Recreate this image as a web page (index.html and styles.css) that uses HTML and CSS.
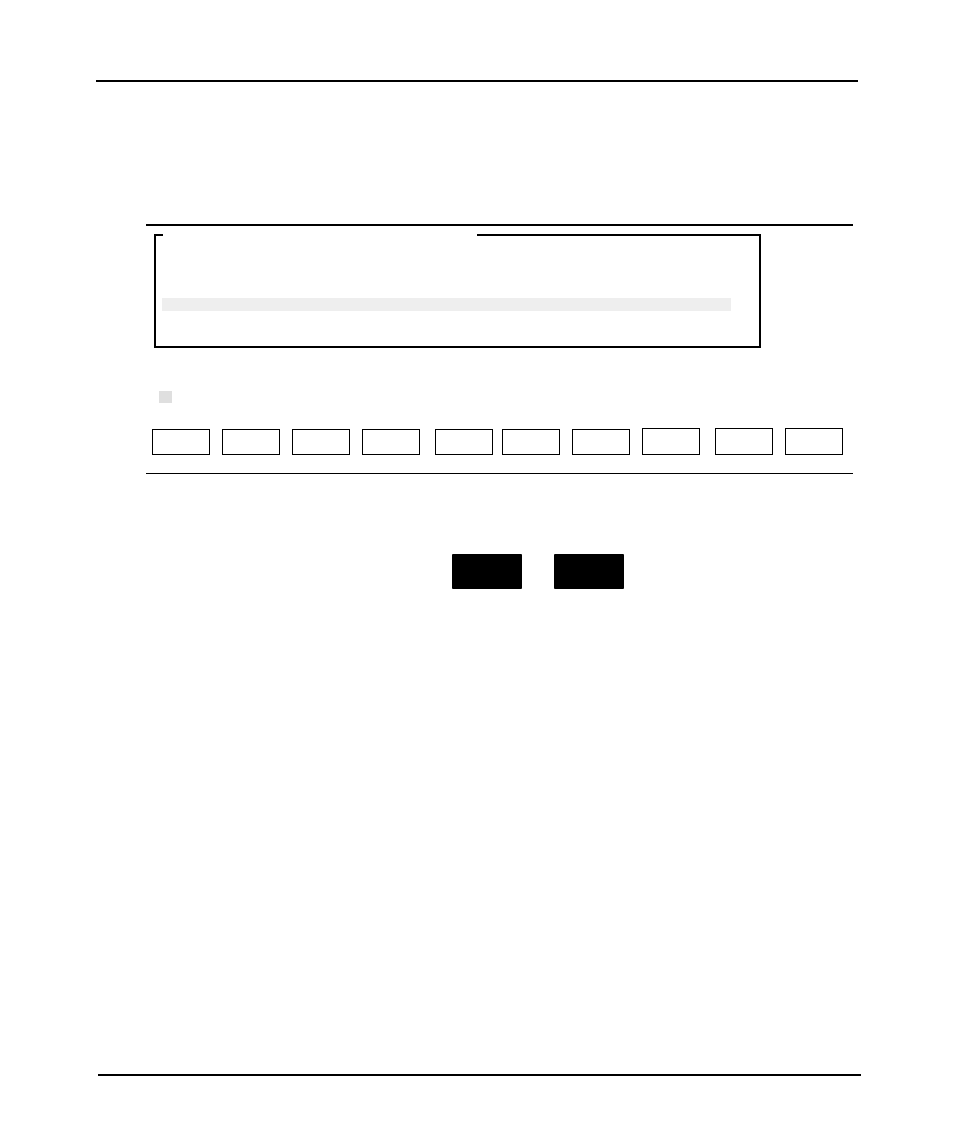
FILE: index.html
```html
<!DOCTYPE html>
<html lang="en">
<head>
  <meta charset="UTF-8">
  <meta name="viewport" content="width=device-width, initial-scale=1.0">
  <title>Screen</title>
  <link rel="stylesheet" href="styles.css">
</head>
<body>
  <header class="page-header"></header>

  <main class="content">
    <section class="screen">
      <fieldset class="panel">
        <legend class="panel-title"></legend>
        <div class="selected-row"></div>
      </fieldset>
      <div class="cursor"></div>
      <div class="softkeys">
        <button type="button" class="softkey" aria-label="F1"></button>
        <button type="button" class="softkey" aria-label="F2"></button>
        <button type="button" class="softkey" aria-label="F3"></button>
        <button type="button" class="softkey" aria-label="F4"></button>
        <button type="button" class="softkey" aria-label="F5"></button>
        <button type="button" class="softkey" aria-label="F6"></button>
        <button type="button" class="softkey" aria-label="F7"></button>
        <button type="button" class="softkey tall" aria-label="F8"></button>
        <button type="button" class="softkey tall" aria-label="F9"></button>
        <button type="button" class="softkey tall" aria-label="F10"></button>
      </div>
    </section>

    <div class="keys">
      <button type="button" class="key" aria-label="Previous"></button>
      <button type="button" class="key" aria-label="Next"></button>
    </div>
  </main>

  <footer class="page-footer"></footer>
</body>
</html>
```
FILE: styles.css
```css
:root {
  --line-color: #000000;
  --row-color: #eeeeee;
  --cursor-color: #dfdfdf;
}

* {
  box-sizing: border-box;
  margin: 0;
  padding: 0;
}

body {
  display: flex;
  flex-direction: column;
  min-height: 100vh;
  padding: 80px 0 69px;
  font-family: "Liberation Sans", Arial, sans-serif;
  background-color: #ffffff;
}

.page-header {
  margin: 0 96px;
  border-top: 2px solid var(--line-color);
}

.page-footer {
  margin: auto 93px 0 98px;
  border-top: 2px solid var(--line-color);
}

.content {
  margin: 142px 101px 0 146px;
}

/* Screen */
.screen {
  padding-top: 8px;
  border-top: 2px solid var(--line-color);
  border-bottom: 1px solid var(--line-color);
}

.panel {
  margin: 0 92px 0 8px;
  padding: 62px 28px 35px 6px;
  border: 2px solid var(--line-color);
}

.panel-title {
  width: 314px;
  height: 2px;
  margin-left: 1px;
}

.selected-row {
  height: 13px;
  background-color: var(--row-color);
}

.cursor {
  width: 13px;
  height: 12px;
  margin: 43px 0 0 13px;
  background-color: var(--cursor-color);
}

/* Softkeys sit in uneven columns, bottoms aligned */
.softkeys {
  display: grid;
  grid-template-columns: 70fr 70fr 70fr 73fr 67fr 70fr 70fr 73fr 70fr 58fr;
  align-items: end;
  padding: 25px 10px 18px 6px;
}

.softkey {
  width: 58px;
  height: 26px;
  border: 1px solid var(--line-color);
  background: none;
  cursor: pointer;
}

.softkey.tall {
  height: 27px;
}

/* Keys below the screen */
.keys {
  display: flex;
  gap: 32px;
  margin: 80px 0 0 306px;
}

.key {
  width: 70px;
  height: 35px;
  border: none;
  border-radius: 1px;
  background-color: var(--line-color);
  cursor: pointer;
}
```
